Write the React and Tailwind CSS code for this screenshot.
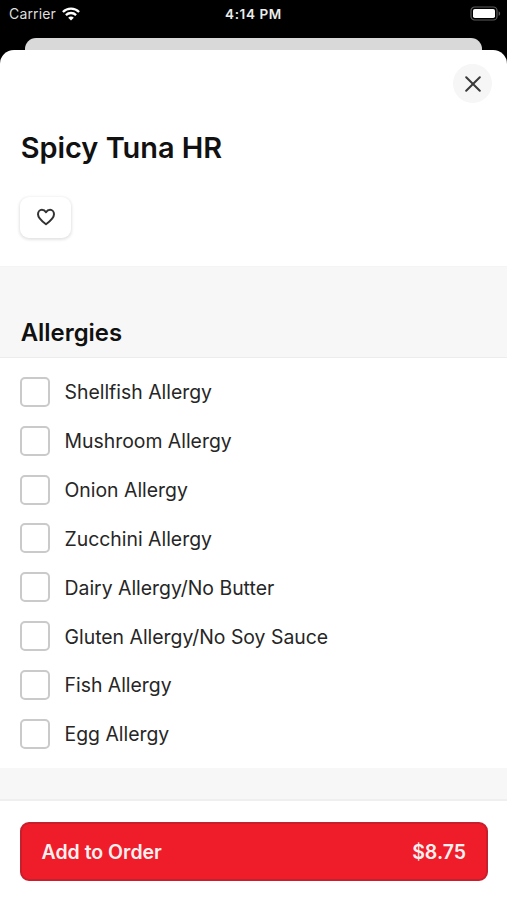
import { useState } from 'react'

const ALLERGIES = [
  'Shellfish Allergy',
  'Mushroom Allergy',
  'Onion Allergy',
  'Zucchini Allergy',
  'Dairy Allergy/No Butter',
  'Gluten Allergy/No Soy Sauce',
  'Fish Allergy',
  'Egg Allergy',
]

const WifiIcon = () => (
  <svg width="18" height="14" viewBox="0 0 18 14" fill="none" stroke="#fff" strokeWidth="2.3">
    <path d="M0.9 5C5.4 0.6 12.6 0.6 17.1 5" />
    <path d="M3.9 8.1C6.8 5.3 11.2 5.3 14.1 8.1" />
    <path d="M9 13.6L6.2 10.7C7.8 9.2 10.2 9.2 11.8 10.7Z" fill="#fff" stroke="none" />
  </svg>
)

const BatteryIcon = () => (
  <svg width="31" height="15" viewBox="0 0 31 15" fill="none">
    <rect x="1" y="1" width="26" height="13" rx="3.6" stroke="#5c5c5c" strokeWidth="1.2" />
    <rect x="3" y="3" width="22" height="9" rx="1.8" fill="#fff" />
    <path d="M28.6 5.2C30.6 6 30.6 9 28.6 9.8Z" fill="#5c5c5c" />
  </svg>
)

const StatusBar = () => (
  <div className="grid h-[38px] shrink-0 grid-cols-3 items-start text-white">
    <div className="flex h-[27px] items-center gap-[6px] pl-[9px] text-[14px] tracking-[0.15px] text-[#dedede]">
      Carrier
      <WifiIcon />
    </div>
    <div className="flex h-7 items-center justify-center text-[13.5px] font-semibold tracking-[0.6px] text-[#ececec]">
      4:14 PM
    </div>
    <div className="flex h-[27px] items-center justify-end pr-[6px]">
      <BatteryIcon />
    </div>
  </div>
)

const AllergyRow = ({ label, checked, onToggle }) => (
  <label className="flex h-[48.85px] items-center gap-[14.5px] text-[19.4px] text-[#262626]">
    <input
      type="checkbox"
      checked={checked}
      onChange={onToggle}
      className="size-[30px] appearance-none rounded-[5px] border-2 border-[#cacaca] bg-white checked:bg-[#ef1c29]"
    />
    <span className="pt-[2px]">{label}</span>
  </label>
)

const App = () => {
  const [selected, setSelected] = useState([])

  const toggle = (name) => {
    setSelected((prev) =>
      prev.includes(name) ? prev.filter((item) => item !== name) : [...prev, name]
    )
  }

  return (
    <div className="flex h-[900px] w-full flex-col overflow-hidden bg-black font-['Inter',sans-serif]">
      <StatusBar />
      <div className="mx-[25px] h-3 shrink-0 rounded-t-[11px] bg-[#d9d9d9]" />

      <main className="flex flex-1 flex-col overflow-hidden rounded-t-[14px] bg-white">
        <header className="flex h-[216px] shrink-0 flex-col px-5 pt-[14px]">
          <button
            aria-label="Close"
            className="-mr-[5px] flex size-[39px] items-center justify-center self-end rounded-full bg-[#f6f6f6]"
          >
            <svg width="16" height="16" viewBox="0 0 16 16" fill="none" stroke="#3a3a3a" strokeWidth="2" strokeLinecap="round">
              <path d="M1.2 1.2L14.8 14.8M14.8 1.2L1.2 14.8" />
            </svg>
          </button>
          <h1 className="mt-[27px] pl-[0.7px] text-[28.9px] leading-9 font-semibold text-[#111]">Spicy Tuna HR</h1>
          <button
            aria-label="Favorite"
            className="mt-[31px] flex h-[41px] w-[51px] items-center justify-center rounded-[9px] bg-white pb-px shadow-[0_1px_3px_1px_rgba(0,0,0,0.11)]"
          >
            <svg width="20" height="18" viewBox="0 0 20 18" fill="none" stroke="#333" strokeWidth="2" strokeLinejoin="round">
              <path d="M10 16.2C6.2 13.4 2 10 2 6.2C2 3.7 3.7 1.8 5.9 1.8C7.6 1.8 9.1 2.7 10 4.2C10.9 2.7 12.4 1.8 14.1 1.8C16.3 1.8 18 3.7 18 6.2C18 10 13.8 13.4 10 16.2Z" />
            </svg>
          </button>
        </header>

        <div className="flex h-[92px] shrink-0 items-end border-y border-t-[#f4f4f4] border-b-[#ececec] bg-[#f7f7f7] px-5 pb-2">
          <h2 className="pl-[0.7px] text-[23.9px] leading-8 font-semibold text-[#111]">Allergies</h2>
        </div>

        <section className="h-[410px] shrink-0 px-5 pt-[9.5px]">
          {ALLERGIES.map((name) => (
            <AllergyRow
              key={name}
              label={name}
              checked={selected.includes(name)}
              onToggle={() => toggle(name)}
            />
          ))}
        </section>

        <div className="h-[33px] shrink-0 border-b-2 border-b-[#efefef] bg-[#f7f7f7]" />

        <footer className="flex-1 bg-white px-5 pt-[21px]">
          <button className="flex h-[59px] w-[468px] items-center justify-between rounded-[9px] border-2 border-[#c71f2b] bg-[#ef1c29] pt-[2px] pr-5 pl-[19.5px] text-[19.5px] font-semibold text-[#fff0f0]">
            <span>Add to Order</span>
            <span>$8.75</span>
          </button>
        </footer>
      </main>
    </div>
  )
}

export default App
